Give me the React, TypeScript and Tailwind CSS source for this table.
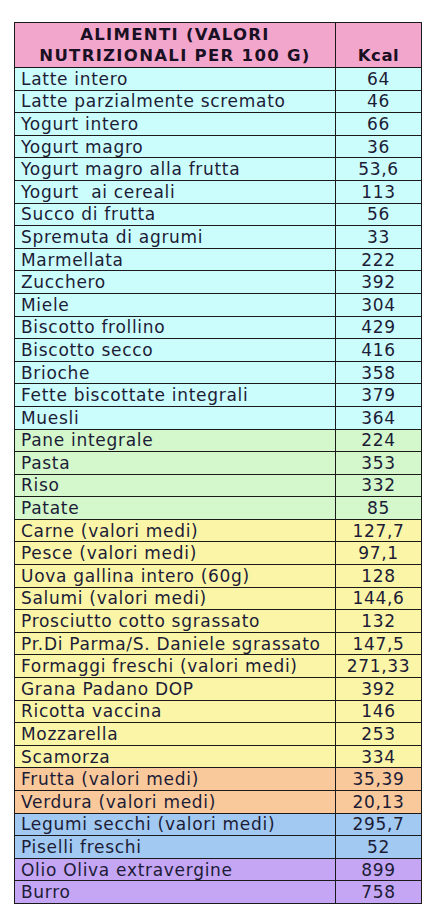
import React from 'react'

type Row = { name: string; kcal: string; group: string }

const groups: Record<string, string> = {
  cyan: 'bg-[#ccfdfd]',
  green: 'bg-[#d4f8cc]',
  yellow: 'bg-[#fbf5a8]',
  orange: 'bg-[#f9c99c]',
  blue: 'bg-[#a1c9f2]',
  purple: 'bg-[#c4a6f5]',
}

const rows: Row[] = [
  { name: 'Latte intero', kcal: '64', group: 'cyan' },
  { name: 'Latte parzialmente scremato', kcal: '46', group: 'cyan' },
  { name: 'Yogurt intero', kcal: '66', group: 'cyan' },
  { name: 'Yogurt magro', kcal: '36', group: 'cyan' },
  { name: 'Yogurt magro alla frutta', kcal: '53,6', group: 'cyan' },
  { name: 'Yogurt  ai cereali', kcal: '113', group: 'cyan' },
  { name: 'Succo di frutta', kcal: '56', group: 'cyan' },
  { name: 'Spremuta di agrumi', kcal: '33', group: 'cyan' },
  { name: 'Marmellata', kcal: '222', group: 'cyan' },
  { name: 'Zucchero', kcal: '392', group: 'cyan' },
  { name: 'Miele', kcal: '304', group: 'cyan' },
  { name: 'Biscotto frollino', kcal: '429', group: 'cyan' },
  { name: 'Biscotto secco', kcal: '416', group: 'cyan' },
  { name: 'Brioche', kcal: '358', group: 'cyan' },
  { name: 'Fette biscottate integrali', kcal: '379', group: 'cyan' },
  { name: 'Muesli', kcal: '364', group: 'cyan' },
  { name: 'Pane integrale', kcal: '224', group: 'green' },
  { name: 'Pasta', kcal: '353', group: 'green' },
  { name: 'Riso', kcal: '332', group: 'green' },
  { name: 'Patate', kcal: '85', group: 'green' },
  { name: 'Carne (valori medi)', kcal: '127,7', group: 'yellow' },
  { name: 'Pesce (valori medi)', kcal: '97,1', group: 'yellow' },
  { name: 'Uova gallina intero (60g)', kcal: '128', group: 'yellow' },
  { name: 'Salumi (valori medi)', kcal: '144,6', group: 'yellow' },
  { name: 'Prosciutto cotto sgrassato', kcal: '132', group: 'yellow' },
  { name: 'Pr.Di Parma/S. Daniele sgrassato', kcal: '147,5', group: 'yellow' },
  { name: 'Formaggi freschi (valori medi)', kcal: '271,33', group: 'yellow' },
  { name: 'Grana Padano DOP', kcal: '392', group: 'yellow' },
  { name: 'Ricotta vaccina', kcal: '146', group: 'yellow' },
  { name: 'Mozzarella', kcal: '253', group: 'yellow' },
  { name: 'Scamorza', kcal: '334', group: 'yellow' },
  { name: 'Frutta (valori medi)', kcal: '35,39', group: 'orange' },
  { name: 'Verdura (valori medi)', kcal: '20,13', group: 'orange' },
  { name: 'Legumi secchi (valori medi)', kcal: '295,7', group: 'blue' },
  { name: 'Piselli freschi', kcal: '52', group: 'blue' },
  { name: 'Olio Oliva extravergine', kcal: '899', group: 'purple' },
  { name: 'Burro', kcal: '758', group: 'purple' },
]

export default function App() {
  return (
    <div className="min-h-[916px] w-[432px] bg-white pt-[22px] pl-[14px] font-['DejaVu_Sans',Verdana,sans-serif] text-[#1c1c36]">
      <table className="w-[407px] table-fixed border-collapse">
        <colgroup>
          <col className="w-[321px]" />
          <col className="w-[86px]" />
        </colgroup>
        <thead>
          <tr className="h-[45px] bg-[#f3a6cb]">
            <th className="border border-[#1a1a1a] pb-[1px] align-bottom text-[16.5px] leading-[21px] font-bold tracking-[1.3px] text-[#1a1024]">
              ALIMENTI (VALORI
              <br />
              NUTRIZIONALI PER 100 G)
            </th>
            <th className="border border-[#1a1a1a] pb-[1px] align-bottom text-[16.5px] leading-[21px] font-bold tracking-[0.5px] text-[#1a1024]">
              Kcal
            </th>
          </tr>
        </thead>
        <tbody>
          {rows.map((r) => (
            <tr key={r.name} className={`h-[22.6px] ${groups[r.group]}`}>
              <td className="border border-[#1a1a1a] pl-[6px] text-[17px] leading-[18px] tracking-[0.7px] whitespace-pre">
                {r.name}
              </td>
              <td className="border border-[#1a1a1a] text-center text-[17px] leading-[18px] tracking-[0.7px]">
                {r.kcal}
              </td>
            </tr>
          ))}
        </tbody>
      </table>
    </div>
  )
}
